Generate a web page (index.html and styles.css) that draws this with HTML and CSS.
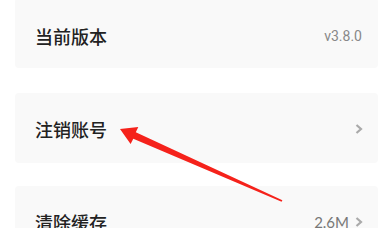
FILE: index.html
```html
<!DOCTYPE html>
<html lang="zh-CN">

<head>
    <meta charset="UTF-8">
    <meta name="viewport" content="width=device-width, initial-scale=1.0">
    <title>设置</title>
    <link rel="stylesheet" href="styles.css">
</head>

<body>
    <div class="page">
        <ul class="menu">
            <li class="cell first">
                <span class="label">当前版本</span>
                <span class="value">v3.8.0</span>
            </li>
            <li class="cell">
                <span class="label">注销账号</span>
                <span class="more">
                    <svg class="chevron" viewBox="0 0 8 10"><path d="M1.5 1 L6 5 L1.5 9" /></svg>
                </span>
            </li>
            <li class="cell">
                <span class="label">清除缓存</span>
                <span class="more">
                    <span class="value thin">2.6M</span>
                    <svg class="chevron" viewBox="0 0 8 10"><path d="M1.5 1 L6 5 L1.5 9" /></svg>
                </span>
            </li>
        </ul>

        <!-- 标注箭头 -->
        <svg class="arrow" viewBox="0 0 384 228">
            <polygon points="120,129 138.3,127 135.8,132.2 282.4,200.3 281.6,201.7 133.3,138.8 130.6,144" />
        </svg>
    </div>
</body>

</html>
```

FILE: styles.css
```css
* {
    box-sizing: border-box;
}

body {
    margin: 0;
    background-color: #ffffff;
    font-family: "Noto Sans CJK SC", "Noto Sans", sans-serif;
}

.page {
    width: 384px;
    height: 228px;
    position: relative;
    overflow: hidden;
}

.menu {
    list-style-type: none;
    margin: 0;
    padding: 0 6px 0 15px;
}

.cell {
    height: 70px;
    margin-bottom: 23px;
    padding: 2px 15px 0 20px;
    display: flex;
    align-items: center;
    justify-content: space-between;
    background-color: #f9f9f9;
    border-radius: 4px;
}

.cell.first {
    height: 70px;
    margin-top: -2px;
    margin-bottom: 25px;
    padding-top: 6px;
}

.label {
    font-size: 18px;
    font-weight: 500;
    color: #222222;
}

.value {
    font-family: Roboto, "Liberation Sans", sans-serif;
    font-size: 14px;
    color: #888888;
    margin-right: 1px;
}

.value.thin {
    font-family: Lato, "Noto Sans", sans-serif;
    font-size: 15px;
    color: #777777;
    margin-right: 6px;
}

.more {
    display: flex;
    align-items: center;
}

.chevron {
    width: 8px;
    height: 10px;
}

.chevron path {
    fill: none;
    stroke: #aaaaaa;
    stroke-width: 2.2;
}

.arrow {
    position: absolute;
    left: 0;
    top: 0;
    width: 384px;
    height: 228px;
}

.arrow polygon {
    fill: #f5221b;
}
```
